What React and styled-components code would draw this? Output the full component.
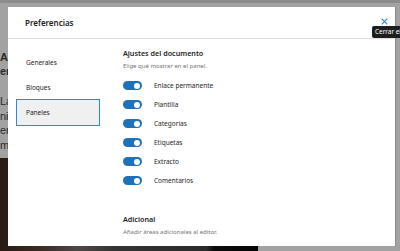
import React from 'react';
import styled, { createGlobalStyle } from 'styled-components';

const GlobalStyle = createGlobalStyle`
  html, body {
    margin: 0;
    padding: 0;
    overflow: hidden;
    font-family: "Noto Sans", "Open Sans", sans-serif;
  }
`;

const Page = styled.div`
  position: relative;
  width: 400px;
  height: 251px;
  overflow: hidden;
  background: #a2a2a2;
  border-top: 3px solid #8c8c8c;
  box-sizing: border-box;
  display: flex;
  flex-direction: column;
`;

const EditorText = styled.div`
  padding-top: 47px;
  font-family: "Liberation Sans", sans-serif;
  color: #2a2a2a;

  h2 {
    margin: 0;
    font-size: 11px;
    line-height: 14px;
    font-weight: 700;
  }

  p {
    margin: 16px 0 0;
    font-size: 11px;
    line-height: 14.5px;
  }
`;

const EditorImage = styled.div`
  margin-top: auto;
  width: 258px;
  height: 93px;
  background: linear-gradient(90deg, #2a1a14 0%, #3a2a24 15%, #4c4846 30%, #333 45%, #2b2b2b 80%, #0c0c0c 83%, #050505 100%);
`;

const Modal = styled.div`
  position: absolute;
  top: 4px;
  left: 8px;
  width: 388px;
  height: 239px;
  background: #fff;
  border-right: 1px solid #8a8a8a;
  box-sizing: border-box;
  display: flex;
  flex-direction: column;
  color: #1e1e1e;
`;

const Header = styled.div`
  position: relative;
  height: 32px;
  flex: none;
  display: flex;
  align-items: center;
  justify-content: space-between;
  padding: 0 4px 0 17px;
  border-bottom: 1px solid #e0e0e0;
  box-sizing: border-box;
`;

const Title = styled.h1`
  margin: 0;
  font-size: 8px;
  font-weight: 600;
  color: #1e1e1e;
`;

const Close = styled.button`
  position: relative;
  width: 14px;
  height: 14px;
  padding: 0;
  border: none;
  background: none;
  display: flex;
  align-items: center;
  justify-content: center;
  color: #2c86d0;
  top: -1px;
`;

const Tooltip = styled.div`
  position: absolute;
  top: 23px;
  left: 372px;
  background: #1e1e1e;
  color: #fff;
  font-size: 6.4px;
  line-height: 12px;
  padding: 0 3px;
  white-space: nowrap;
  border-radius: 2px;
`;

const Body = styled.div`
  flex: 1;
  display: flex;
`;

const Sidebar = styled.nav`
  width: 92px;
  padding: 11px 0 0 8px;
  box-sizing: border-box;
  display: flex;
  flex-direction: column;
`;

const Tab = styled.div`
  height: ${p => (p.$active ? 27 : 25)}px;
  display: flex;
  align-items: center;
  padding-left: 9px;
  font-size: 6.5px;
  color: #1e1e1e;
  box-sizing: border-box;
  background: ${p => (p.$active ? '#f0f0f0' : 'transparent')};
  border: 1px solid ${p => (p.$active ? '#2c8ad6' : 'transparent')};
  margin-top: ${p => (p.$active ? -1 : 0)}px;
`;

const Content = styled.div`
  flex: 1;
  padding: 8px 0 0 23px;
`;

const SectionTitle = styled.h2`
  margin: 0;
  font-size: 7.2px;
  line-height: 12px;
  font-weight: 600;
  color: #1e1e1e;
`;

const SectionHint = styled.p`
  margin: 2px 0 0;
  font-size: 6px;
  line-height: 10px;
  color: #757575;
`;

const OptionList = styled.div`
  margin-top: 10px;
  display: flex;
  flex-direction: column;
  gap: 10px;
`;

const Option = styled.label`
  display: flex;
  align-items: center;
  height: 9px;
  gap: 12px;
  font-size: 6.5px;
  color: #1e1e1e;
`;

const Toggle = styled.span`
  position: relative;
  width: 19px;
  height: 9px;
  border-radius: 5px;
  background: #1f72b8;
  flex: none;

  &::after {
    content: '';
    position: absolute;
    top: 1.5px;
    right: 2px;
    width: 6px;
    height: 6px;
    border-radius: 50%;
    background: #fff;
  }
`;

const Additional = styled.div`
  margin-top: 28px;
`;

const options = ['Enlace permanente', 'Plantilla', 'Categorías', 'Etiquetas', 'Extracto', 'Comentarios'];

export default function App() {
  return (
    <>
      <GlobalStyle />
      <Page>
        <EditorText>
          <h2>Ar<br />er</h2>
          <p>La<br />ni<br />er<br />m</p>
        </EditorText>
        <EditorImage />

        <Modal>
          <Header>
            <Title>Preferencias</Title>
            <Close aria-label="Cerrar el diálogo">
              <svg width="7" height="7" viewBox="0 0 10 10">
                <path d="M1 1 L9 9 M9 1 L1 9" stroke="currentColor" strokeWidth="1.6" />
              </svg>
            </Close>
          </Header>
          <Body>
            <Sidebar>
              <Tab>Generales</Tab>
              <Tab>Bloques</Tab>
              <Tab $active>Paneles</Tab>
            </Sidebar>
            <Content>
              <SectionTitle>Ajustes del documento</SectionTitle>
              <SectionHint>Elige qué mostrar en el panel.</SectionHint>
              <OptionList>
                {options.map(o => (
                  <Option key={o}>
                    <Toggle />
                    {o}
                  </Option>
                ))}
              </OptionList>
              <Additional>
                <SectionTitle>Adicional</SectionTitle>
                <SectionHint>Añadir áreas adicionales al editor.</SectionHint>
              </Additional>
            </Content>
          </Body>
        </Modal>
        <Tooltip>Cerrar el diálogo</Tooltip>
      </Page>
    </>
  );
}
